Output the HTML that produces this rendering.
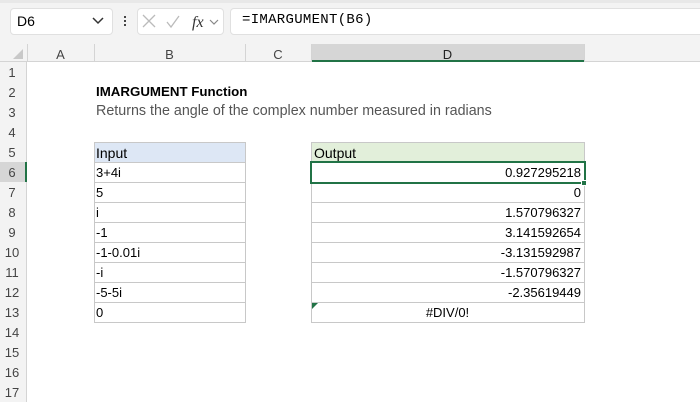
<!DOCTYPE html>
<html><head><style>
body{margin:0;width:700px;height:400px;overflow:hidden;background:#fff;font-family:"Liberation Sans",sans-serif;position:relative}
.a{position:absolute;box-sizing:border-box}
.t{font-size:13px;color:#000}
</style></head><body>
<div class="a" style="left:0;top:0;width:700px;height:44px;background:#f3f3f3"></div>
<div class="a" style="left:0;top:0;width:700px;height:3px;background:#e8e8e8"></div>
<div class="a" style="left:10px;top:8px;width:103px;height:27px;background:#fff;border:1px solid #e0e0e0;border-radius:4px"></div>
<div class="a t" style="left:17px;top:13px;font-size:14px">D6</div>
<svg class="a" style="left:92px;top:17px" width="12" height="8"><path d="M1 1l5 5 5-5" stroke="#333" fill="none" stroke-width="1.5"/></svg>
<div class="a" style="left:124px;top:16px;width:2px;height:2px;background:#444;box-shadow:0 4px #444,0 8px #444"></div>
<div class="a" style="left:137px;top:8px;width:87px;height:27px;background:#fff;border:1px solid #e0e0e0;border-radius:4px"></div>
<svg class="a" style="left:140px;top:12px" width="84" height="20"><path d="M3 3l12 12M15 3L3 15" stroke="#bbb" stroke-width="1.3"/><path d="M27 10l4 5 8-11" stroke="#bbb" fill="none" stroke-width="1.3"/><text x="52" y="15" font-family="Liberation Serif" font-style="italic" font-size="16" fill="#333">fx</text><path d="M70 8l4 4 4-4" stroke="#888" fill="none" stroke-width="1.2"/></svg>
<div class="a" style="left:230px;top:8px;width:475px;height:27px;background:#fff;border:1px solid #e0e0e0;border-radius:4px"></div>
<div class="a" style="left:242px;top:12px;font-family:'Liberation Mono',monospace;font-size:14px;letter-spacing:0.3px">=IMARGUMENT(B6)</div>
<div class="a" style="left:0;top:44px;width:700px;height:18px;background:#f3f3f3;border-bottom:1px solid #d4d4d4"></div>
<div class="a" style="left:311px;top:44px;width:273px;height:18px;background:#d6d6d6;border-bottom:2px solid #217346"></div>
<svg class="a" style="left:12px;top:48px" width="12" height="12"><path d="M11 1V11H1z" fill="#c8c8c8"/></svg>
<div class="a t" style="left:27px;top:47px;width:67px;text-align:center;color:#444">A</div>
<div class="a t" style="left:94px;top:47px;width:151px;text-align:center;color:#444">B</div>
<div class="a t" style="left:245px;top:47px;width:66px;text-align:center;color:#444">C</div>
<div class="a t" style="left:311px;top:47px;width:273px;text-align:center;color:#222">D</div>
<div class="a" style="left:27px;top:44px;width:1px;height:18px;background:#d4d4d4"></div>
<div class="a" style="left:94px;top:44px;width:1px;height:18px;background:#d4d4d4"></div>
<div class="a" style="left:245px;top:44px;width:1px;height:18px;background:#d4d4d4"></div>
<div class="a" style="left:311px;top:44px;width:1px;height:18px;background:#d4d4d4"></div>
<div class="a" style="left:584px;top:44px;width:1px;height:18px;background:#d4d4d4"></div>
<div class="a" style="left:0;top:62px;width:27px;height:340px;background:#f3f3f3;border-right:1px solid #d4d4d4"></div>
<div class="a" style="left:0;top:162px;width:27px;height:20px;background:#d6d6d6;border-right:2px solid #217346"></div>
<div id="rh"></div>
<script>
var h='';for(var i=1;i<=17;i++){h+='<div class="a t" style="left:0;top:'+(62+(i-1)*20+3)+'px;width:24px;text-align:center;color:#444">'+i+'</div>';}
document.getElementById('rh').outerHTML=h;
</script>
<div class="a" style="left:96px;top:84px;font-size:13.3px;font-weight:bold">IMARGUMENT Function</div>
<div class="a" style="left:96px;top:103px;font-size:14.3px;color:#555">Returns the angle of the complex number measured in radians</div>
<div class="a" style="left:94px;top:142px;width:151px;height:20px;background:#dde7f5"></div>
<div class="a" style="left:311px;top:142px;width:273px;height:20px;background:#e2efda"></div>
<div id="tb"></div>
<script>
var inp=['Input','3+4i','5','i','-1','-1-0.01i','-i','-5-5i','0'];
var out=['Output','0.927295218','0','1.570796327','3.141592654','-3.131592987','-1.570796327','-2.35619449','#DIV/0!'];
var h='';
for(var i=0;i<9;i++){var y=142+i*20;
h+='<div class="a" style="left:94px;top:'+y+'px;width:152px;height:21px;border:1px solid #c8c8c8"></div>';
h+='<div class="a t" style="left:96px;top:'+(y+3)+'px;font-size:'+(i==0?14:13)+'px">'+inp[i]+'</div>';
h+='<div class="a" style="left:311px;top:'+y+'px;width:274px;height:21px;border:1px solid #c8c8c8"></div>';
if(i==0)h+='<div class="a t" style="left:314px;top:'+(y+3)+'px;font-size:14px">Output</div>';
else if(i==8)h+='<div class="a t" style="left:311px;top:'+(y+3)+'px;width:273px;text-align:center">'+out[i]+'</div>';
else h+='<div class="a t" style="left:311px;top:'+(y+3)+'px;width:270px;text-align:right">'+out[i]+'</div>';}
document.getElementById('tb').outerHTML=h;
</script>
<div class="a" style="left:310px;top:161px;width:276px;height:23px;border:2px solid #217346"></div>
<div class="a" style="left:581px;top:180px;width:6px;height:6px;background:#217346;border:1px solid #fff"></div>
<svg class="a" style="left:312px;top:303px" width="6" height="6"><path d="M0 0h6L0 6z" fill="#217346"/></svg>
</body></html>
